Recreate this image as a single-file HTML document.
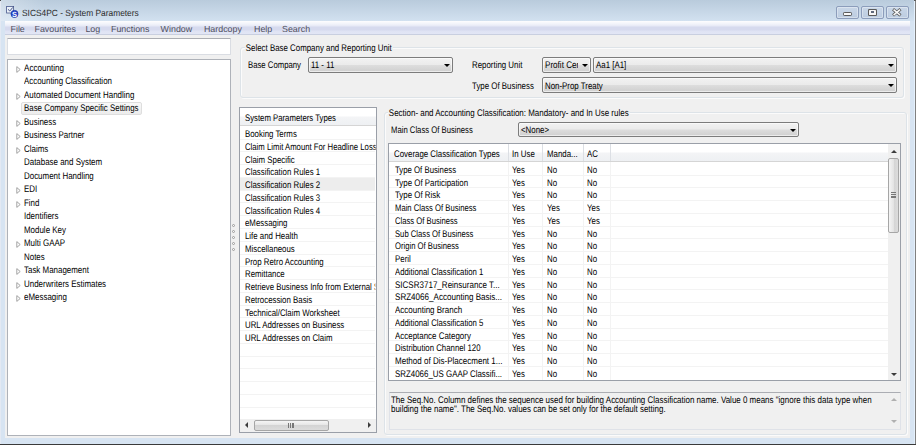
<!DOCTYPE html>
<html><head><meta charset="utf-8"><title>SICS4PC - System Parameters</title>
<style>
html,body{margin:0;padding:0;}
body{width:916px;height:445px;overflow:hidden;position:relative;background:#d7e4f2;
 font-family:"Liberation Sans",sans-serif;font-size:7.85px;color:#000;line-height:1;text-rendering:geometricPrecision;}
.a{position:absolute;white-space:nowrap;}
.t{position:absolute;white-space:nowrap;height:10px;line-height:10px;font-size:9.6px;transform:scaleX(0.8207);transform-origin:0 0;}
#title{left:0;top:0;width:916px;height:21px;background:linear-gradient(90deg,rgba(255,255,255,.3) 0,rgba(255,255,255,0) 45px),linear-gradient(#b9cbdc,#d2e1f0);}
#edgeL{left:0;top:0;width:1px;height:445px;background:#e3e9f3;}
#edgeR{left:914px;top:0;width:1px;height:445px;background:#e4f0fc;}
#edgeR2{left:915px;top:0;width:1px;height:445px;background:#808080;}
#edgeB{left:0;top:444px;width:916px;height:1px;background:#3a3a3a;}
#menu{left:5px;top:21px;width:905px;height:14px;
 background:linear-gradient(#fdfdfe 0px,#f1f3fa 3px,#e6e9f6 5px,#d6daee 6px,#d6daee 9px,#dfe3f4 10px,#e2e6f5 13px,#c9cfe0 13px,#c9cfe0 14px);}
#menu span{position:absolute;top:2.9px;height:10px;line-height:10px;font-size:8.9px;color:#50505f;}
#client{left:5px;top:35px;width:905px;height:403px;background:#f0f0f0;}
.cb{position:absolute;box-sizing:border-box;border:1px solid #7c7c7c;border-radius:2px;
 background:linear-gradient(#f2f2f2 0%,#ebebeb 48%,#dddddd 52%,#cfcfcf 100%);box-shadow:inset 0 0 0 1px rgba(255,255,255,.6);}
.cb span{position:absolute;left:1.9px;top:3px;height:10px;line-height:10px;white-space:nowrap;font-size:9.6px;transform:scaleX(0.8207);transform-origin:0 0;}
.cb i{position:absolute;right:2.5px;top:5.7px;width:0;height:0;border-left:3px solid transparent;border-right:3px solid transparent;border-top:3.5px solid #000;}
.gb{position:absolute;box-sizing:border-box;border:1px solid #dde3e8;border-radius:3px;box-shadow:1px 1px 0 #fbfbfb,inset 1px 1px 0 #fbfbfb;}
.gbt{position:absolute;background:#f0f0f0;padding:0 1px;height:10px;line-height:10px;white-space:nowrap;font-size:9.6px;transform:scaleX(0.8207);transform-origin:0 0;}
.wb{position:absolute;box-sizing:border-box;background:#fff;border:1px solid #9a9fa8;}
.hl{position:absolute;height:1px;background:#f3f3f3;}
.vl{position:absolute;width:1px;background:#f3f3f3;}
.tri{position:absolute;}
</style></head><body>

<div class="a" id="title"></div>
<div class="a" id="menu">
<span style="left:5.5px">File</span>
<span style="left:29.5px">Favourites</span>
<span style="left:80.4px">Log</span>
<span style="left:106px">Functions</span>
<span style="left:155.6px">Window</span>
<span style="left:198.9px">Hardcopy</span>
<span style="left:249px">Help</span>
<span style="left:277px">Search</span>
</div>
<div class="a" id="client"></div>
<div class="a" id="edgeL"></div><div class="a" id="edgeR"></div><div class="a" id="edgeR2"></div><div class="a" id="edgeB"></div>
<div class="a" style="left:0;top:0;width:1px;height:1px;background:#4a4a4a"></div><div class="a" style="left:914px;top:0;width:2px;height:1px;background:#5a5a5a"></div>
<svg class="a" style="left:5px;top:5px" width="15" height="15" viewBox="0 0 15 15">
<rect x="1.6" y="1.4" width="7" height="6.6" fill="#eaf0f8" stroke="#46568a" stroke-width=".8"/>
<path d="M3 4.3 L4.8 6 L7.8 2.4" fill="none" stroke="#46568a" stroke-width="1"/>
<circle cx="9.5" cy="8.9" r="3.6" fill="#2243cc" stroke="#16308f" stroke-width=".5"/>
<text x="9.5" y="11.5" font-family="Liberation Sans,sans-serif" font-weight="bold" font-size="7.4" fill="#fff" text-anchor="middle">S</text>
</svg>
<div class="t" style="left:21.6px;top:8px;font-size:9px;transform:scaleX(.93);color:#2a2a2a;height:11px;line-height:11px">SICS4PC - System Parameters</div>
<div class="a" style="left:836px;top:6px;width:23px;height:13px;box-sizing:border-box;border:1px solid #8c9dbb;border-radius:2px;background:linear-gradient(#c9d7e8,#bccce0);box-shadow:inset 0 0 0 1px rgba(255,255,255,.35)"></div>
<div class="a" style="left:861px;top:6px;width:23px;height:13px;box-sizing:border-box;border:1px solid #8c9dbb;border-radius:2px;background:linear-gradient(#c9d7e8,#bccce0);box-shadow:inset 0 0 0 1px rgba(255,255,255,.35)"></div>
<div class="a" style="left:886px;top:6px;width:23px;height:13px;box-sizing:border-box;border:1px solid #8c9dbb;border-radius:2px;background:linear-gradient(#c9d7e8,#bccce0);box-shadow:inset 0 0 0 1px rgba(255,255,255,.35)"></div>
<div class="a" style="left:843px;top:12.1px;width:9px;height:3.7px;background:#f8f8f8;border:0.9px solid #5a5a5a;border-radius:1.2px;box-sizing:border-box"></div>
<div class="a" style="left:868px;top:8.9px;width:8.8px;height:6.9px;background:#5a5a5a;border-radius:1.3px"></div>
<div class="a" style="left:868.8px;top:9.7px;width:7.2px;height:5.3px;background:#f6f6f6;border-radius:.6px"></div>
<div class="a" style="left:870.6px;top:11.1px;width:3.6px;height:2.1px;background:#8e9bb4;border:.5px solid #60697c;box-sizing:border-box"></div>
<svg class="a" style="left:891px;top:7px" width="12" height="11" viewBox="0 0 12 11"><path d="M3.2 3.2 L8.4 7.5 M8.4 3.2 L3.2 7.5" stroke="#5a5a5a" stroke-width="3" stroke-linecap="square"/><path d="M3.2 3.2 L8.4 7.5 M8.4 3.2 L3.2 7.5" stroke="#f8f8f8" stroke-width="1.6" stroke-linecap="square"/></svg>
<div class="a" style="left:7px;top:38px;width:224px;height:17px;box-sizing:border-box;background:#fff;border:1px solid #dadde3;border-top-color:#abadb3;border-radius:1px"></div>
<div class="wb" style="left:7px;top:59px;width:224px;height:377px;border-color:#aeb2b9"></div>
<div class="a" style="left:21px;top:102px;width:121px;height:12.5px;box-sizing:border-box;border:1px solid #dedede;border-radius:2px;background:linear-gradient(#f9f9f9,#ececec)"></div>
<svg class="tri" style="left:15.8px;top:65.70px" width="5" height="7" viewBox="0 0 5 7"><path d="M0.8 0.6 L4.2 3.5 L0.8 6.4 Z" fill="#fff" stroke="#9a9a9a" stroke-width=".9"/></svg>
<div class="t" style="left:24.2px;top:64px;transform:scaleX(0.8421);">Accounting</div>
<div class="t" style="left:24.2px;top:77px;transform:scaleX(0.8244);">Accounting Classification</div>
<svg class="tri" style="left:15.8px;top:92.70px" width="5" height="7" viewBox="0 0 5 7"><path d="M0.8 0.6 L4.2 3.5 L0.8 6.4 Z" fill="#fff" stroke="#9a9a9a" stroke-width=".9"/></svg>
<div class="t" style="left:24.2px;top:91px;transform:scaleX(0.8279);">Automated Document Handling</div>
<div class="t" style="left:24.2px;top:104px;transform:scaleX(0.8226);">Base Company Specific Settings</div>
<svg class="tri" style="left:15.8px;top:119.70px" width="5" height="7" viewBox="0 0 5 7"><path d="M0.8 0.6 L4.2 3.5 L0.8 6.4 Z" fill="#fff" stroke="#9a9a9a" stroke-width=".9"/></svg>
<div class="t" style="left:24.2px;top:118px;transform:scaleX(0.8279);">Business</div>
<svg class="tri" style="left:15.8px;top:132.70px" width="5" height="7" viewBox="0 0 5 7"><path d="M0.8 0.6 L4.2 3.5 L0.8 6.4 Z" fill="#fff" stroke="#9a9a9a" stroke-width=".9"/></svg>
<div class="t" style="left:24.2px;top:131px;transform:scaleX(0.8279);">Business Partner</div>
<svg class="tri" style="left:15.8px;top:146.70px" width="5" height="7" viewBox="0 0 5 7"><path d="M0.8 0.6 L4.2 3.5 L0.8 6.4 Z" fill="#fff" stroke="#9a9a9a" stroke-width=".9"/></svg>
<div class="t" style="left:24.2px;top:145px;transform:scaleX(0.8279);">Claims</div>
<div class="t" style="left:24.2px;top:158px;transform:scaleX(0.8279);">Database and System</div>
<div class="t" style="left:24.2px;top:172px;transform:scaleX(0.8279);">Document Handling</div>
<svg class="tri" style="left:15.8px;top:186.70px" width="5" height="7" viewBox="0 0 5 7"><path d="M0.8 0.6 L4.2 3.5 L0.8 6.4 Z" fill="#fff" stroke="#9a9a9a" stroke-width=".9"/></svg>
<div class="t" style="left:24.2px;top:185px;transform:scaleX(0.8279);">EDI</div>
<svg class="tri" style="left:15.8px;top:200.70px" width="5" height="7" viewBox="0 0 5 7"><path d="M0.8 0.6 L4.2 3.5 L0.8 6.4 Z" fill="#fff" stroke="#9a9a9a" stroke-width=".9"/></svg>
<div class="t" style="left:24.2px;top:199px;transform:scaleX(0.8279);">Find</div>
<div class="t" style="left:24.2px;top:212px;transform:scaleX(0.8279);">Identifiers</div>
<div class="t" style="left:24.2px;top:226px;transform:scaleX(0.8279);">Module Key</div>
<svg class="tri" style="left:15.8px;top:240.70px" width="5" height="7" viewBox="0 0 5 7"><path d="M0.8 0.6 L4.2 3.5 L0.8 6.4 Z" fill="#fff" stroke="#9a9a9a" stroke-width=".9"/></svg>
<div class="t" style="left:24.2px;top:239px;transform:scaleX(0.8279);">Multi GAAP</div>
<div class="t" style="left:24.2px;top:253px;transform:scaleX(0.8279);">Notes</div>
<svg class="tri" style="left:15.8px;top:267.70px" width="5" height="7" viewBox="0 0 5 7"><path d="M0.8 0.6 L4.2 3.5 L0.8 6.4 Z" fill="#fff" stroke="#9a9a9a" stroke-width=".9"/></svg>
<div class="t" style="left:24.2px;top:266px;transform:scaleX(0.8279);">Task Management</div>
<svg class="tri" style="left:15.8px;top:281.70px" width="5" height="7" viewBox="0 0 5 7"><path d="M0.8 0.6 L4.2 3.5 L0.8 6.4 Z" fill="#fff" stroke="#9a9a9a" stroke-width=".9"/></svg>
<div class="t" style="left:24.2px;top:280px;transform:scaleX(0.8279);">Underwriters Estimates</div>
<svg class="tri" style="left:15.8px;top:294.70px" width="5" height="7" viewBox="0 0 5 7"><path d="M0.8 0.6 L4.2 3.5 L0.8 6.4 Z" fill="#fff" stroke="#9a9a9a" stroke-width=".9"/></svg>
<div class="t" style="left:24.2px;top:293px;transform:scaleX(0.8279);">eMessaging</div>
<div class="a" style="left:232.4px;top:223.8px;width:3px;height:3px;border:0.8px solid #9a9a9a;border-radius:50%;box-sizing:border-box;background:#fafafa"></div>
<div class="a" style="left:232.4px;top:229.9px;width:3px;height:3px;border:0.8px solid #9a9a9a;border-radius:50%;box-sizing:border-box;background:#fafafa"></div>
<div class="a" style="left:232.4px;top:236.0px;width:3px;height:3px;border:0.8px solid #9a9a9a;border-radius:50%;box-sizing:border-box;background:#fafafa"></div>
<div class="a" style="left:232.4px;top:242.1px;width:3px;height:3px;border:0.8px solid #9a9a9a;border-radius:50%;box-sizing:border-box;background:#fafafa"></div>
<div class="a" style="left:232.4px;top:248.2px;width:3px;height:3px;border:0.8px solid #9a9a9a;border-radius:50%;box-sizing:border-box;background:#fafafa"></div>
<div class="gb" style="left:240px;top:47px;width:664px;height:50.5px"></div>
<div class="gbt" style="left:245.2px;top:44px;transform:scaleX(0.8217)">Select Base Company and Reporting Unit</div>
<div class="t" style="left:248.3px;top:61px;transform:scaleX(0.8075)">Base Company</div>
<div class="cb" style="left:308px;top:57px;width:145px;height:16px"><span>11 - 11</span><i></i></div>
<div class="t" style="left:472px;top:61px;transform:scaleX(0.8217)">Reporting Unit</div>
<div class="cb" style="left:542px;top:57px;width:49px;height:16px"><span style="width:39px;overflow:hidden;transform:scaleX(0.8438)">Profit Center</span><i></i></div>
<div class="cb" style="left:593px;top:57px;width:304px;height:16px"><span>Aa1 [A1]</span><i></i></div>
<div class="t" style="left:472px;top:82px;transform:scaleX(0.8226)">Type Of Business</div>
<div class="cb" style="left:542px;top:77px;width:355px;height:16px"><span style="top:4px">Non-Prop Treaty</span><i></i></div>
<div class="wb" style="left:239px;top:107px;width:138px;height:325.5px"></div>
<div class="a" style="left:240px;top:108px;width:136px;height:17px;background:linear-gradient(#fff 0%,#fff 45%,#f3f4f6 55%,#eef0f3 100%);border-bottom:1px solid #d5d5d5"></div>
<div class="t" style="left:245.1px;top:114px;transform:scaleX(0.8092)">System Parameters Types</div>
<div class="a" style="left:240px;top:178px;width:134.8px;height:12px;background:#ededed"></div>
<div class="hl" style="left:240px;top:139px;width:134.8px"></div>
<div class="hl" style="left:240px;top:151px;width:134.8px"></div>
<div class="hl" style="left:240px;top:164px;width:134.8px"></div>
<div class="hl" style="left:240px;top:177px;width:134.8px"></div>
<div class="hl" style="left:240px;top:190px;width:134.8px"></div>
<div class="hl" style="left:240px;top:202px;width:134.8px"></div>
<div class="hl" style="left:240px;top:215px;width:134.8px"></div>
<div class="hl" style="left:240px;top:228px;width:134.8px"></div>
<div class="hl" style="left:240px;top:241px;width:134.8px"></div>
<div class="hl" style="left:240px;top:254px;width:134.8px"></div>
<div class="hl" style="left:240px;top:266px;width:134.8px"></div>
<div class="hl" style="left:240px;top:279px;width:134.8px"></div>
<div class="hl" style="left:240px;top:292px;width:134.8px"></div>
<div class="hl" style="left:240px;top:305px;width:134.8px"></div>
<div class="hl" style="left:240px;top:317px;width:134.8px"></div>
<div class="hl" style="left:240px;top:330px;width:134.8px"></div>
<div class="hl" style="left:240px;top:343px;width:134.8px"></div>
<div class="hl" style="left:240px;top:356px;width:134.8px"></div>
<div class="hl" style="left:240px;top:368px;width:134.8px"></div>
<div class="hl" style="left:240px;top:381px;width:134.8px"></div>
<div class="hl" style="left:240px;top:394px;width:134.8px"></div>
<div class="hl" style="left:240px;top:407px;width:134.8px"></div>
<div class="t" style="left:245.1px;top:130px;width:159.4px;overflow:hidden;transform:scaleX(0.8191)">Booking Terms</div>
<div class="t" style="left:245.1px;top:143px;width:161.8px;overflow:hidden;transform:scaleX(0.807)">Claim Limit Amount For Headline Loss</div>
<div class="t" style="left:245.1px;top:156px;width:159.4px;overflow:hidden;transform:scaleX(0.8191)">Claim Specific</div>
<div class="t" style="left:245.1px;top:168px;width:159.4px;overflow:hidden;transform:scaleX(0.8191)">Classification Rules 1</div>
<div class="t" style="left:245.1px;top:181px;width:159.4px;overflow:hidden;transform:scaleX(0.8191)">Classification Rules 2</div>
<div class="t" style="left:245.1px;top:194px;width:159.4px;overflow:hidden;transform:scaleX(0.8191)">Classification Rules 3</div>
<div class="t" style="left:245.1px;top:207px;width:159.4px;overflow:hidden;transform:scaleX(0.8191)">Classification Rules 4</div>
<div class="t" style="left:245.1px;top:219px;width:159.4px;overflow:hidden;transform:scaleX(0.8191)">eMessaging</div>
<div class="t" style="left:245.1px;top:232px;width:159.4px;overflow:hidden;transform:scaleX(0.8191)">Life and Health</div>
<div class="t" style="left:245.1px;top:245px;width:159.4px;overflow:hidden;transform:scaleX(0.8191)">Miscellaneous</div>
<div class="t" style="left:245.1px;top:258px;width:159.4px;overflow:hidden;transform:scaleX(0.8191)">Prop Retro Accounting</div>
<div class="t" style="left:245.1px;top:270px;width:159.4px;overflow:hidden;transform:scaleX(0.8191)">Remittance</div>
<div class="t" style="left:245.1px;top:283px;width:160.3px;overflow:hidden;transform:scaleX(0.8146)">Retrieve Business Info from External Systems</div>
<div class="t" style="left:245.1px;top:296px;width:159.4px;overflow:hidden;transform:scaleX(0.8191)">Retrocession Basis</div>
<div class="t" style="left:245.1px;top:309px;width:159.4px;overflow:hidden;transform:scaleX(0.8191)">Technical/Claim Worksheet</div>
<div class="t" style="left:245.1px;top:321px;width:159.4px;overflow:hidden;transform:scaleX(0.8191)">URL Addresses on Business</div>
<div class="t" style="left:245.1px;top:334px;width:159.4px;overflow:hidden;transform:scaleX(0.8191)">URL Addresses on Claim</div>
<div class="a" style="left:240px;top:419px;width:136px;height:12.5px;background:#f0f0f0"></div>
<div class="a" style="left:254px;top:420px;width:75px;height:11px;box-sizing:border-box;border:1px solid #a6a6a6;border-radius:2px;background:linear-gradient(#f5f5f5,#e4e4e4 50%,#d4d4d4 50%,#dcdcdc)"></div>
<div class="a" style="left:288.4px;top:423.3px;width:.8px;height:4.4px;background:#777"></div>
<div class="a" style="left:290.0px;top:423.3px;width:.8px;height:4.4px;background:#777"></div>
<div class="a" style="left:291.6px;top:423.3px;width:.8px;height:4.4px;background:#777"></div>
<div class="a" style="left:293.2px;top:423.3px;width:.8px;height:4.4px;background:#777"></div>
<div class="a" style="left:245.2px;top:422.4px;width:0;height:0;border-top:3.1px solid transparent;border-bottom:3.1px solid transparent;border-right:3.4px solid #3c3c3c"></div>
<div class="a" style="left:368.3px;top:422.4px;width:0;height:0;border-top:3.1px solid transparent;border-bottom:3.1px solid transparent;border-left:3.4px solid #3c3c3c"></div>
<div class="gb" style="left:384px;top:112px;width:522.5px;height:322.5px"></div>
<div class="gbt" style="left:387.9px;top:109px;transform:scaleX(0.8296)">Section- and Accounting Classification: Mandatory- and In Use rules</div>
<div class="t" style="left:391px;top:126px;transform:scaleX(0.8031)">Main Class Of Business</div>
<div class="cb" style="left:518px;top:122px;width:281px;height:15px"><span>&lt;None&gt;</span><i></i></div>
<div class="wb" style="left:388px;top:143px;width:513px;height:237.5px"></div>
<div class="a" style="left:389px;top:144px;width:499px;height:17px;background:linear-gradient(#fff 0%,#fff 45%,#f3f4f6 55%,#eef0f3 100%);border-bottom:1px solid #d5d5d5"></div>
<div class="vl" style="left:508px;top:144px;height:17px;background:#dcdfe4"></div>
<div class="vl" style="left:508px;top:162px;height:217.5px"></div>
<div class="vl" style="left:542.3px;top:144px;height:17px;background:#dcdfe4"></div>
<div class="vl" style="left:542.3px;top:162px;height:217.5px"></div>
<div class="vl" style="left:583px;top:144px;height:17px;background:#dcdfe4"></div>
<div class="vl" style="left:583px;top:162px;height:217.5px"></div>
<div class="vl" style="left:609.7px;top:144px;height:17px;background:#dcdfe4"></div>
<div class="vl" style="left:609.7px;top:162px;height:217.5px"></div>
<div class="t" style="left:394px;top:150px">Coverage Classification Types</div>
<div class="t" style="left:512.3px;top:150px">In Use</div>
<div class="t" style="left:546.6px;top:150px">Manda...</div>
<div class="t" style="left:587.2px;top:150px">AC</div>
<div class="hl" style="left:389px;top:175px;width:499px"></div>
<div class="hl" style="left:389px;top:187px;width:499px"></div>
<div class="hl" style="left:389px;top:200px;width:499px"></div>
<div class="hl" style="left:389px;top:213px;width:499px"></div>
<div class="hl" style="left:389px;top:226px;width:499px"></div>
<div class="hl" style="left:389px;top:238px;width:499px"></div>
<div class="hl" style="left:389px;top:251px;width:499px"></div>
<div class="hl" style="left:389px;top:264px;width:499px"></div>
<div class="hl" style="left:389px;top:277px;width:499px"></div>
<div class="hl" style="left:389px;top:289px;width:499px"></div>
<div class="hl" style="left:389px;top:302px;width:499px"></div>
<div class="hl" style="left:389px;top:315px;width:499px"></div>
<div class="hl" style="left:389px;top:328px;width:499px"></div>
<div class="hl" style="left:389px;top:340px;width:499px"></div>
<div class="hl" style="left:389px;top:353px;width:499px"></div>
<div class="hl" style="left:389px;top:366px;width:499px"></div>
<div class="t" style="left:394.5px;top:166px;transform:scaleX(0.8119)">Type Of Business</div>
<div class="t" style="left:512.3px;top:166px;transform:scaleX(0.8207)">Yes</div>
<div class="t" style="left:547px;top:166px;transform:scaleX(0.8207)">No</div>
<div class="t" style="left:587.4px;top:166px;transform:scaleX(0.8207)">No</div>
<div class="t" style="left:394.5px;top:179px;transform:scaleX(0.8207)">Type Of Participation</div>
<div class="t" style="left:512.3px;top:179px;transform:scaleX(0.8207)">Yes</div>
<div class="t" style="left:547px;top:179px;transform:scaleX(0.8207)">No</div>
<div class="t" style="left:587.4px;top:179px;transform:scaleX(0.8207)">No</div>
<div class="t" style="left:394.5px;top:191px;transform:scaleX(0.8207)">Type Of Risk</div>
<div class="t" style="left:512.3px;top:191px;transform:scaleX(0.8207)">Yes</div>
<div class="t" style="left:547px;top:191px;transform:scaleX(0.8207)">No</div>
<div class="t" style="left:587.4px;top:191px;transform:scaleX(0.8207)">No</div>
<div class="t" style="left:394.5px;top:204px;transform:scaleX(0.7997)">Main Class Of Business</div>
<div class="t" style="left:512.3px;top:204px;transform:scaleX(0.8207)">Yes</div>
<div class="t" style="left:547px;top:204px;transform:scaleX(0.8207)">Yes</div>
<div class="t" style="left:587.4px;top:204px;transform:scaleX(0.8207)">Yes</div>
<div class="t" style="left:394.5px;top:217px;transform:scaleX(0.7997)">Class Of Business</div>
<div class="t" style="left:512.3px;top:217px;transform:scaleX(0.8207)">Yes</div>
<div class="t" style="left:547px;top:217px;transform:scaleX(0.8207)">Yes</div>
<div class="t" style="left:587.4px;top:217px;transform:scaleX(0.8207)">Yes</div>
<div class="t" style="left:394.5px;top:230px;transform:scaleX(0.7997)">Sub Class Of Business</div>
<div class="t" style="left:512.3px;top:230px;transform:scaleX(0.8207)">Yes</div>
<div class="t" style="left:547px;top:230px;transform:scaleX(0.8207)">No</div>
<div class="t" style="left:587.4px;top:230px;transform:scaleX(0.8207)">No</div>
<div class="t" style="left:394.5px;top:242px;transform:scaleX(0.7997)">Origin Of Business</div>
<div class="t" style="left:512.3px;top:242px;transform:scaleX(0.8207)">Yes</div>
<div class="t" style="left:547px;top:242px;transform:scaleX(0.8207)">No</div>
<div class="t" style="left:587.4px;top:242px;transform:scaleX(0.8207)">No</div>
<div class="t" style="left:394.5px;top:255px;transform:scaleX(0.8207)">Peril</div>
<div class="t" style="left:512.3px;top:255px;transform:scaleX(0.8207)">Yes</div>
<div class="t" style="left:547px;top:255px;transform:scaleX(0.8207)">No</div>
<div class="t" style="left:587.4px;top:255px;transform:scaleX(0.8207)">No</div>
<div class="t" style="left:394.5px;top:268px;transform:scaleX(0.8081)">Additional Classification 1</div>
<div class="t" style="left:512.3px;top:268px;transform:scaleX(0.8207)">Yes</div>
<div class="t" style="left:547px;top:268px;transform:scaleX(0.8207)">No</div>
<div class="t" style="left:587.4px;top:268px;transform:scaleX(0.8207)">No</div>
<div class="t" style="left:394.5px;top:281px;transform:scaleX(0.8363)">SICSR3717_Reinsurance T...</div>
<div class="t" style="left:512.3px;top:281px;transform:scaleX(0.8207)">Yes</div>
<div class="t" style="left:547px;top:281px;transform:scaleX(0.8207)">No</div>
<div class="t" style="left:587.4px;top:281px;transform:scaleX(0.8207)">No</div>
<div class="t" style="left:394.5px;top:293px;transform:scaleX(0.84)">SRZ4066_Accounting Basis...</div>
<div class="t" style="left:512.3px;top:293px;transform:scaleX(0.8207)">Yes</div>
<div class="t" style="left:547px;top:293px;transform:scaleX(0.8207)">No</div>
<div class="t" style="left:587.4px;top:293px;transform:scaleX(0.8207)">No</div>
<div class="t" style="left:394.5px;top:306px;transform:scaleX(0.8334)">Accounting Branch</div>
<div class="t" style="left:512.3px;top:306px;transform:scaleX(0.8207)">Yes</div>
<div class="t" style="left:547px;top:306px;transform:scaleX(0.8207)">No</div>
<div class="t" style="left:587.4px;top:306px;transform:scaleX(0.8207)">No</div>
<div class="t" style="left:394.5px;top:319px;transform:scaleX(0.8081)">Additional Classification 5</div>
<div class="t" style="left:512.3px;top:319px;transform:scaleX(0.8207)">Yes</div>
<div class="t" style="left:547px;top:319px;transform:scaleX(0.8207)">No</div>
<div class="t" style="left:587.4px;top:319px;transform:scaleX(0.8207)">No</div>
<div class="t" style="left:394.5px;top:332px;transform:scaleX(0.8269)">Acceptance Category</div>
<div class="t" style="left:512.3px;top:332px;transform:scaleX(0.8207)">Yes</div>
<div class="t" style="left:547px;top:332px;transform:scaleX(0.8207)">No</div>
<div class="t" style="left:587.4px;top:332px;transform:scaleX(0.8207)">No</div>
<div class="t" style="left:394.5px;top:344px;transform:scaleX(0.8138)">Distribution Channel 120</div>
<div class="t" style="left:512.3px;top:344px;transform:scaleX(0.8207)">Yes</div>
<div class="t" style="left:547px;top:344px;transform:scaleX(0.8207)">No</div>
<div class="t" style="left:587.4px;top:344px;transform:scaleX(0.8207)">No</div>
<div class="t" style="left:394.5px;top:357px;transform:scaleX(0.8363)">Method of Dis-Placecment 1...</div>
<div class="t" style="left:512.3px;top:357px;transform:scaleX(0.8207)">Yes</div>
<div class="t" style="left:547px;top:357px;transform:scaleX(0.8207)">No</div>
<div class="t" style="left:587.4px;top:357px;transform:scaleX(0.8207)">No</div>
<div class="t" style="left:394.5px;top:370px;transform:scaleX(0.8241)">SRZ4066_US GAAP Classifi...</div>
<div class="t" style="left:512.3px;top:370px;transform:scaleX(0.8207)">Yes</div>
<div class="t" style="left:547px;top:370px;transform:scaleX(0.8207)">No</div>
<div class="t" style="left:587.4px;top:370px;transform:scaleX(0.8207)">No</div>
<div class="a" style="left:888px;top:144px;width:12px;height:235.5px;background:#f0f0f0"></div>
<div class="a" style="left:888px;top:158px;width:11px;height:75px;box-sizing:border-box;border:1px solid #a6a6a6;border-radius:2px;background:linear-gradient(90deg,#f5f5f5,#e4e4e4 50%,#d4d4d4 50%,#dcdcdc)"></div>
<div class="a" style="left:891.3px;top:192.4px;width:4.4px;height:.8px;background:#777"></div>
<div class="a" style="left:891.3px;top:194.0px;width:4.4px;height:.8px;background:#777"></div>
<div class="a" style="left:891.3px;top:195.6px;width:4.4px;height:.8px;background:#777"></div>
<div class="a" style="left:891.3px;top:197.2px;width:4.4px;height:.8px;background:#777"></div>
<div class="a" style="left:890.5px;top:149.8px;width:0;height:0;border-left:3.2px solid transparent;border-right:3.2px solid transparent;border-bottom:3.4px solid #3c3c3c"></div>
<div class="a" style="left:890.5px;top:372.8px;width:0;height:0;border-left:3.2px solid transparent;border-right:3.2px solid transparent;border-top:3.4px solid #3c3c3c"></div>
<div class="a" style="left:388.5px;top:392px;width:512px;height:37.5px;box-sizing:border-box;border:1px solid #dfe2e8;border-top-color:#abadb3;background:#f0f0f0"></div>
<div class="t" style="left:391.2px;top:396px;transform:scaleX(0.8305)">The Seq.No. Column defines the sequence used for building Accounting Classification name. Value 0 means "ignore this data type when</div>
<div class="t" style="left:391.2px;top:405px;transform:scaleX(0.8305)">building the name". The Seq.No. values can be set only for the default setting.</div>
<div class="a" style="left:890.5px;top:398.3px;width:0;height:0;border-left:3.2px solid transparent;border-right:3.2px solid transparent;border-bottom:3.4px solid #b0b0b0"></div>
<div class="a" style="left:890.5px;top:420px;width:0;height:0;border-left:3.2px solid transparent;border-right:3.2px solid transparent;border-top:3.4px solid #b0b0b0"></div>
</body></html>
